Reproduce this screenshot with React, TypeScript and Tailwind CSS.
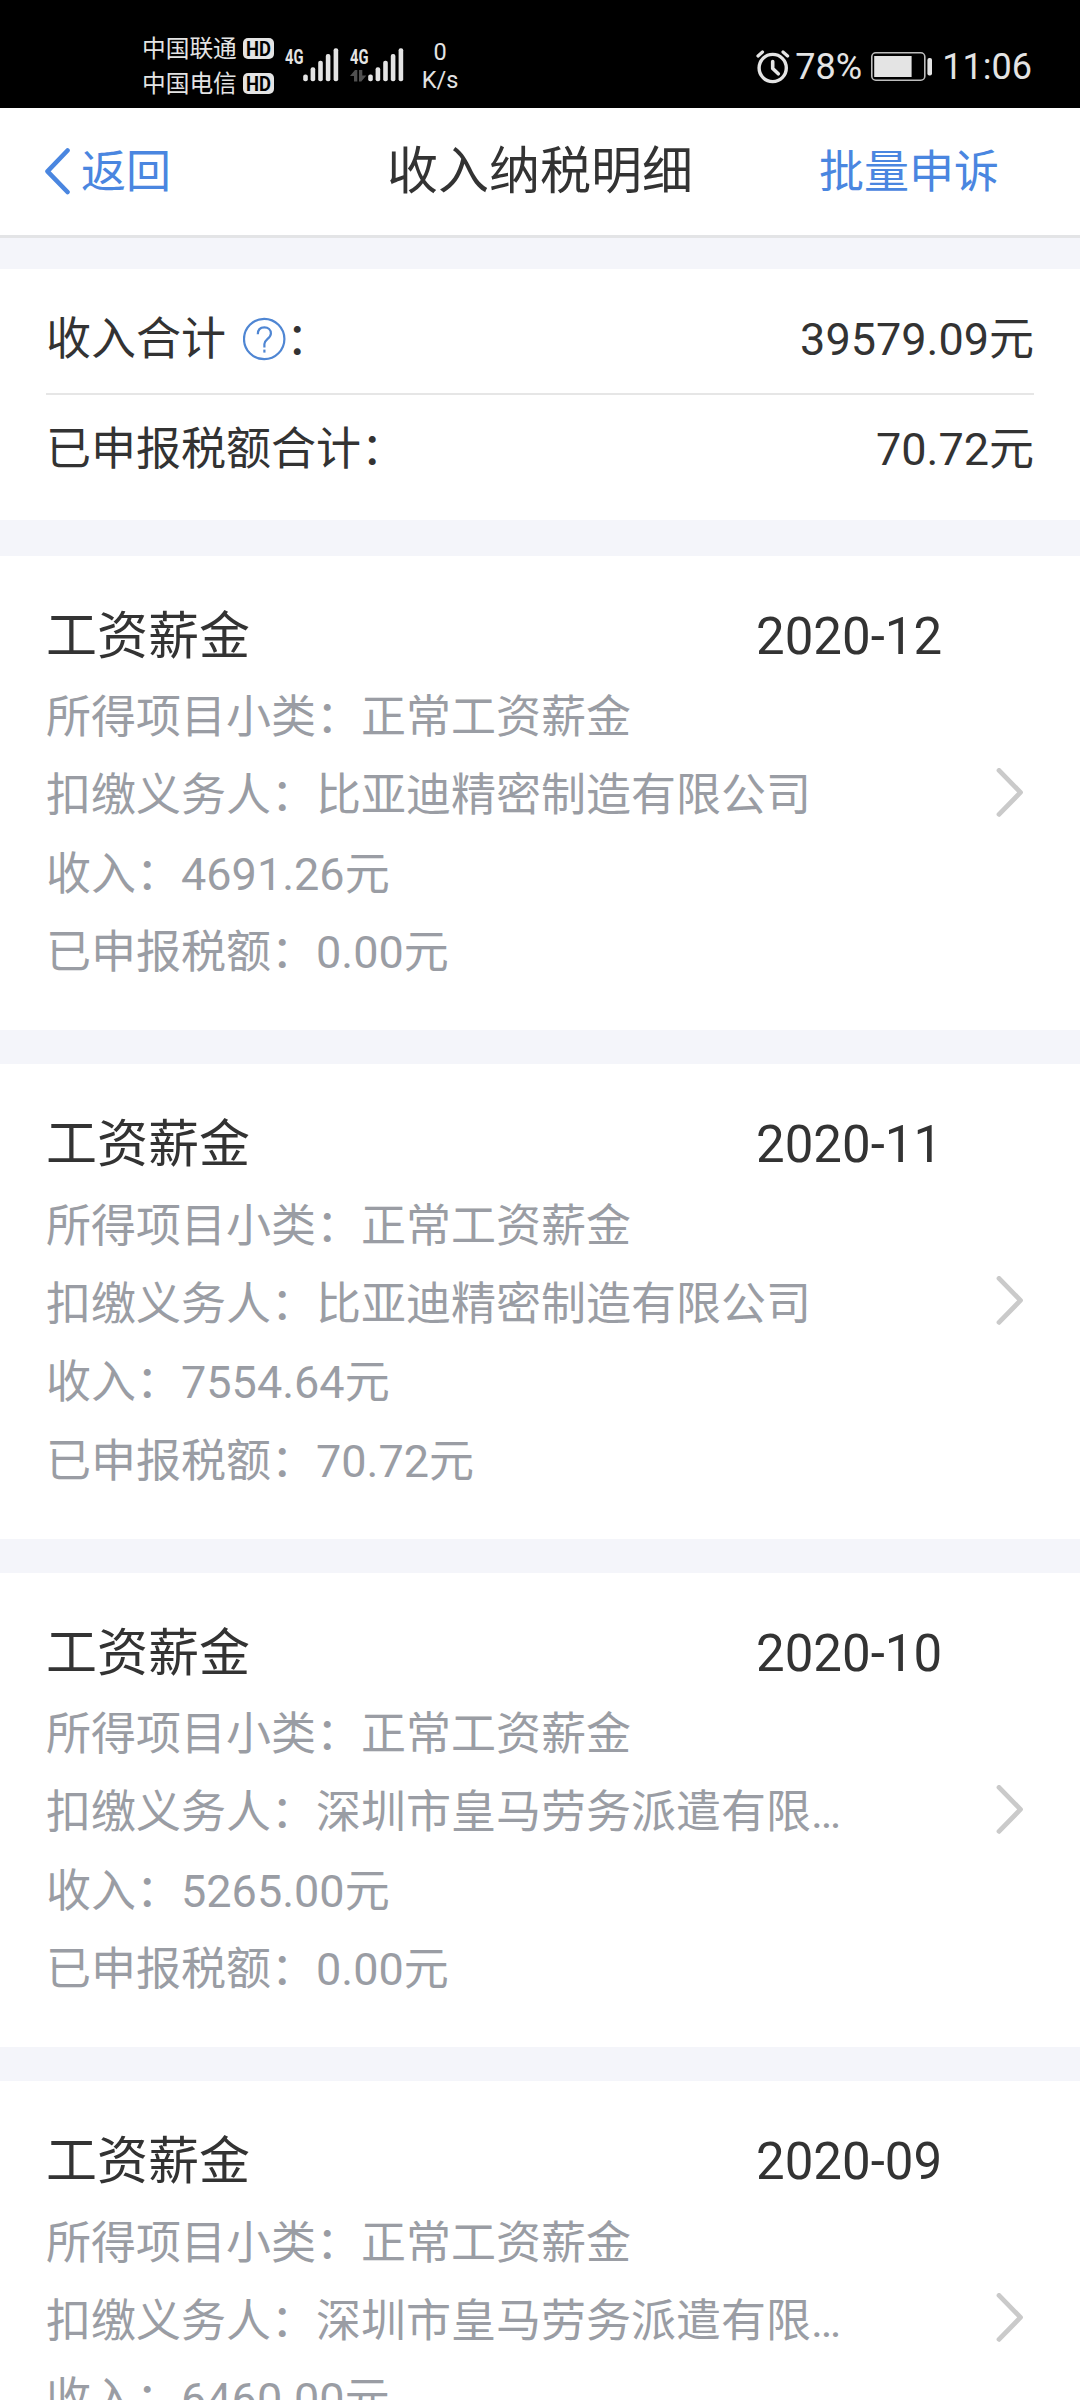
import { Fragment } from "react";

type IncomeRecord = {
  month: string;
  kind: string;
  subKind: string;
  payer: string;
  income: string;
  tax: string;
};

const records: IncomeRecord[] = [
  { month: "2020-12", kind: "工资薪金", subKind: "正常工资薪金", payer: "比亚迪精密制造有限公司", income: "4691.26", tax: "0.00" },
  { month: "2020-11", kind: "工资薪金", subKind: "正常工资薪金", payer: "比亚迪精密制造有限公司", income: "7554.64", tax: "70.72" },
  { month: "2020-10", kind: "工资薪金", subKind: "正常工资薪金", payer: "深圳市皇马劳务派遣有限…", income: "5265.00", tax: "0.00" },
  { month: "2020-09", kind: "工资薪金", subKind: "正常工资薪金", payer: "深圳市皇马劳务派遣有限…", income: "6460.00", tax: "0.00" },
];

const carriers = ["中国联通", "中国电信"];

function HdBadge() {
  return (
    <svg className="overflow-visible" width="31" height="21" viewBox="0 0 31 21">
      <rect width="31" height="21" rx="5" fill="#e4e4e4" />
      <text x="3" y="18" fontSize="21" fontWeight="700" textLength="25" lengthAdjust="spacingAndGlyphs" fill="#000">HD</text>
    </svg>
  );
}

function Signal({ data }: { data?: boolean }) {
  return (
    <svg className="overflow-visible" width="54" height="34" viewBox="0 0 54 34" fill="#e4e4e4">
      <text x="0" y="15.5" fontSize="21" fontWeight="700" textLength="18.5" lengthAdjust="spacingAndGlyphs">4G</text>
      {data && (
        <g fill="#505050">
          <path d="M0 28 L5 22 L7.3 22 L7.3 33.5 L4 33.5 L4 28 Z" />
          <path d="M9 22 L12.3 22 L12.3 27.5 L16.3 27.5 L11.3 33.5 L9 33.5 Z" />
        </g>
      )}
      <rect x="18.2" y="26.5" width="4.6" height="6.7" rx="2" />
      <rect x="25.6" y="19.3" width="4.6" height="13.9" rx="2" />
      <rect x="33.2" y="12.8" width="4.6" height="20.4" rx="2" />
      <rect x="40.8" y="6" width="4.6" height="27.2" rx="2" />
      <rect x="48.6" y="0.3" width="4.6" height="32.9" rx="2" />
    </svg>
  );
}

function AlarmIcon() {
  return (
    <svg width="34" height="34" viewBox="0 0 34 34" fill="none" stroke="#e4e4e4" strokeLinecap="round" strokeLinejoin="round">
      <circle cx="16.7" cy="18" r="13.6" strokeWidth="3.4" />
      <path d="M16.7 11.5 V18.5 L22.3 23.8" strokeWidth="3.6" />
      <path d="M2 6 L6.5 2 M27 2 L31.6 6" strokeWidth="3.2" />
    </svg>
  );
}

function BatteryIcon() {
  return (
    <svg width="62" height="30" viewBox="0 0 62 30">
      <rect x="0.8" y="0.8" width="53" height="27.4" rx="4" fill="none" stroke="#bdbdbd" strokeWidth="1.6" />
      <rect x="3.2" y="4" width="37.4" height="21" fill="#e4e4e4" />
      <rect x="56.4" y="6" width="4.6" height="17.6" rx="2" fill="#e4e4e4" />
    </svg>
  );
}

function StatusBar() {
  return (
    <div className="h-[108px] shrink-0 bg-black text-[#e4e4e4] flex justify-between pl-[142px] pr-[48px]">
      <div className="flex items-start">
        <div className="pt-[31px]">
          {carriers.map((c) => (
            <div key={c} className="flex items-center h-[35px] text-[23.7px] leading-[35px]">
              <span className="w-[101px] pt-[2px]">{c}</span>
              <HdBadge />
            </div>
          ))}
        </div>
        <div className="flex gap-[11px] pl-[11px] pt-[48px]">
          <Signal />
          <Signal data />
        </div>
        <div className="w-[54px] ml-[9px] pt-[38px] text-center text-[23.5px] leading-[28px]">
          <div>0</div>
          <div>K/s</div>
        </div>
      </div>
      <div className="flex items-center pt-[25px] text-[36px] leading-[40px]">
        <AlarmIcon />
        <span className="ml-[5px] w-[76px]">78%</span>
        <BatteryIcon />
        <span className="ml-[9px]">11:06</span>
      </div>
    </div>
  );
}

function NavBar() {
  return (
    <div className="h-[130px] shrink-0 border-b-[3px] border-[#e3e4e6] bg-white grid grid-cols-[1fr_auto_1fr] items-center">
      <div className="flex items-center pl-[43px] text-[45px] text-[#4a86e0]">
        <svg width="28" height="48" viewBox="0 0 28 48" fill="none" stroke="currentColor" strokeWidth="4.6" strokeLinecap="round" strokeLinejoin="round">
          <path d="M24.5 2.5 L4.5 23.3 L24.5 44" />
        </svg>
        <span className="ml-[10px] pt-[2px]">返回</span>
      </div>
      <div className="pt-[2px] text-[51px]">收入纳税明细</div>
      <div className="pt-[2px] pr-[81px] text-right text-[45px] text-[#4a86e0]">批量申诉</div>
    </div>
  );
}

function HelpIcon() {
  return (
    <svg className="ml-[17px] -mt-[2px]" width="43" height="44" viewBox="0 0 43 44" fill="none" stroke="#4f86d3" strokeWidth="2.2">
      <circle cx="21.2" cy="22" r="20.2" />
      <path d="M14.8 17.2 C14.8 12.6 17.6 10.3 21.4 10.3 C25.2 10.3 27.9 12.8 27.9 16.4 C27.9 21.4 21.4 22.2 21.4 27 V30.6" />
      <path d="M21.4 32.6 V35.6" />
    </svg>
  );
}

function Summary() {
  return (
    <div className="h-[251px] shrink-0 bg-white px-[46px] pt-[16px] text-[45px]">
      <div className="flex items-center justify-between h-[110px] pt-[2px] border-b-2 border-[#e6e6e6]">
        <div className="flex items-center"><span>收入合计</span><HelpIcon /><span>：</span></div>
        <span>39579.09元</span>
      </div>
      <div className="flex items-center justify-between h-[107px] pt-[2px]">
        <span>已申报税额合计：</span>
        <span>70.72元</span>
      </div>
    </div>
  );
}

function RecordCard({ r }: { r: IncomeRecord }) {
  return (
    <div className="h-[474.5px] shrink-0 bg-white flex items-center justify-between pl-[46px] pr-[56px]">
      <div className="w-[895px] pt-[2px]">
        <div className="flex items-center justify-between h-[84px] text-[51px] whitespace-nowrap">
          <span>{r.kind}</span>
          <span className="w-[185px] [font-kerning:none]">{r.month}</span>
        </div>
        <div className="text-[45px] leading-[78.3px] text-[#9a9da4] whitespace-nowrap">
          <div>所得项目小类：{r.subKind}</div>
          <div>扣缴义务人：{r.payer}</div>
          <div>收入：{r.income}元</div>
          <div>已申报税额：{r.tax}元</div>
        </div>
      </div>
      <svg width="28" height="50" viewBox="0 0 28 50" fill="none" stroke="#cacaca" strokeWidth="4.8" strokeLinecap="round" strokeLinejoin="round">
        <path d="M3 2.4 L24.5 24.4 L3 46.4" />
      </svg>
    </div>
  );
}

export default function App() {
  return (
    <div lang="zh-CN" className="w-[1080px] h-[2400px] overflow-hidden flex flex-col bg-[#f4f5fa] text-[#333333] font-[Roboto,'Noto_Sans_CJK_SC',sans-serif]">
      <StatusBar />
      <NavBar />
      <div className="h-[31px] shrink-0" />
      <Summary />
      <div className="h-[35.5px] shrink-0" />
      {records.map((r) => (
        <Fragment key={r.month}>
          <RecordCard r={r} />
          <div className="h-[34px] shrink-0" />
        </Fragment>
      ))}
    </div>
  );
}
